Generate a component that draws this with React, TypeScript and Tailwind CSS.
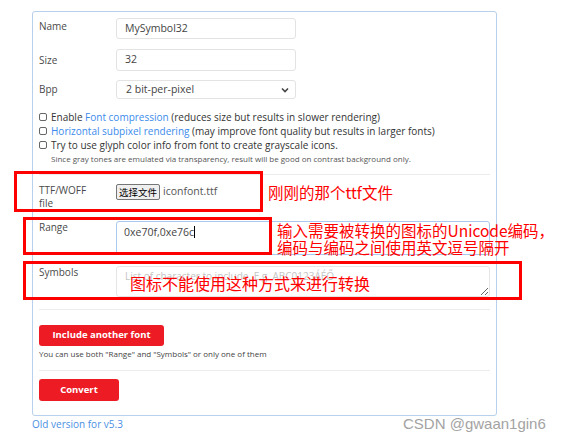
import React from "react";

function Label({ children, className = "" }: { children: React.ReactNode; className?: string }) {
  return <div className={`w-[77px] shrink-0 text-[10px] text-[#4a4a4a] ${className}`}>{children}</div>;
}

function Check({ children }: { children: React.ReactNode }) {
  return (
    <label className="flex items-center h-[14px] text-[10px] text-[#333]">
      <span className="w-[8px] h-[8px] border border-[#666] rounded-[2px] bg-white shrink-0" />
      <span className="ml-[4px] whitespace-nowrap">{children}</span>
    </label>
  );
}

const Link = ({ children }: { children: React.ReactNode }) => (
  <span className="text-[#3b8beb]">{children}</span>
);

export default function App() {
  return (
    <div className="relative w-[564px] h-[443px] bg-white overflow-hidden font-['Open_Sans','Noto_Sans_CJK_SC',sans-serif]">
      <div className="pt-[11px] pl-[32px]">
        <form className="w-[465px] border border-[#b7d0ec] rounded-[3px] pl-[6px] pr-[6px] pt-[6px] pb-[14px]">
          {/* Name */}
          <div className="flex items-start">
            <Label className="leading-[14px] pt-[1px]">Name</Label>
            <div className="w-[180px] h-[21px] border border-[#e3e3e3] rounded-[3px] pl-[8px] flex items-center text-[10.5px] text-[#444]">
              MySymbol32
            </div>
          </div>
          {/* Size */}
          <div className="flex items-center mt-[10px]">
            <Label>Size</Label>
            <div className="w-[180px] h-[22px] border border-[#e3e3e3] rounded-[3px] pl-[8px] flex items-center text-[10.5px] text-[#444]">
              32
            </div>
          </div>
          {/* Bpp */}
          <div className="flex items-center mt-[9px]">
            <Label>Bpp</Label>
            <div className="relative w-[180px] h-[19px] border border-[#e3e3e3] rounded-[3px] pl-[9px] flex items-center text-[10.5px] text-[#444]">
              2 bit-per-pixel
              <svg className="absolute right-[6px] top-[6px]" width="8" height="6" viewBox="0 0 8 6">
                <path d="M1 1.5 L4 4.5 L7 1.5" fill="none" stroke="#444" strokeWidth="1.6" />
              </svg>
            </div>
          </div>

          {/* Options */}
          <div className="mt-[11px]">
            <Check>
              Enable <Link>Font compression</Link> (reduces size but results in slower rendering)
            </Check>
            <Check>
              <Link>Horizontal subpixel rendering</Link> (may improve font quality but results in larger fonts)
            </Check>
            <Check>Try to use glyph color info from font to create grayscale icons.</Check>
            <div className="mt-[2px] pl-[12px] text-[8px] leading-[10px] text-[#555] whitespace-nowrap">
              Since gray tones are emulated via transparency, result will be good on contrast background only.
            </div>
          </div>

          <div className="mt-[10px] h-px bg-[#ececec]" />

          {/* File */}
          <div className="flex items-start mt-[9px]">
            <Label className="leading-[13px]">
              <div className="max-w-[58px]">TTF/WOFF file</div>
            </Label>
            <div className="flex items-center">
              <span className="w-[44px] h-[16px] border border-[#767676] rounded-[2px] bg-[#efefef] flex items-center justify-center text-[9.5px] text-black font-['Noto_Sans_CJK_SC',sans-serif]">
                选择文件
              </span>
              <span className="ml-[3px] text-[10.5px] text-[#555]">iconfont.ttf</span>
            </div>
          </div>

          {/* Range */}
          <div className="flex items-start mt-[11px]">
            <Label className="leading-[12px]">Range</Label>
            <div className="flex-1 h-[34px] border border-[#a9c9f0] rounded-[3px] pl-[7px] pt-[3px] text-[10.5px] leading-[14px] text-[#444]">
              0xe70f,0xe76c
              <span className="inline-block w-px h-[12px] bg-black align-[-2px]" />
            </div>
          </div>

          {/* Symbols */}
          <div className="flex items-start mt-[11px]">
            <Label className="leading-[12px]">Symbols</Label>
            <textarea
              readOnly
              placeholder="List of character to include. E.g. ABC0123ÁÉŐ"
              className="flex-1 h-[31px] border border-[#e6e6e6] rounded-[3px] pl-[8px] pt-[2px] text-[10px] leading-[14px] text-[#444] placeholder:text-[#c4c4c4] outline-none"
            />
          </div>

          <div className="mt-[12px] h-px bg-[#ececec]" />

          <button
            type="button"
            className="mt-[15px] w-[125px] h-[21px] rounded-[3px] bg-[#ed1c24] text-white text-[9.5px] font-bold"
          >
            Include another font
          </button>
          <div className="mt-[3px] text-[8px] leading-[10px] text-[#444] whitespace-nowrap">
            You can use both "Range" and "Symbols" or only one of them
          </div>

          <div className="mt-[11px] h-px bg-[#ececec]" />

          <button
            type="button"
            className="block mt-[8px] w-[80px] h-[22px] rounded-[3px] bg-[#ed1c24] text-white text-[9.5px] font-bold"
          >
            Convert
          </button>
        </form>
        <div className="mt-[1px] text-[10px] leading-[14px] text-[#4a90e2]">Old version for v5.3</div>
      </div>

      {/* annotations drawn over the screenshot */}
      <div className="absolute left-[14px] top-[171px] w-[249px] h-[41px] border-[3px] border-[#ff0000]" />
      <div className="absolute left-[23px] top-[217px] w-[249px] h-[38px] border-[3px] border-[#ff0000]" />
      <div className="absolute left-[23px] top-[261px] w-[499px] h-[39px] border-[3px] border-[#ff0000]" />
      <div className="absolute left-[268px] top-[182px] text-[15.5px] leading-[20px] text-[#ff0000] font-['Noto_Sans_CJK_SC',sans-serif] whitespace-nowrap">
        刚刚的那个ttf文件
      </div>
      <div className="absolute left-[277px] top-[222px] text-[15.5px] leading-[17px] text-[#ff0000] font-['Noto_Sans_CJK_SC',sans-serif] whitespace-nowrap">
        输入需要被转换的图标的Unicode编码，
        <br />
        编码与编码之间使用英文逗号隔开
      </div>
      <div className="absolute left-[130px] top-[273px] text-[16px] leading-[20px] text-[#ff0000] font-['Noto_Sans_CJK_SC',sans-serif] whitespace-nowrap">
        图标不能使用这种方式来进行转换
      </div>
      <div className="absolute left-[403px] top-[415px] text-[15px] leading-[18px] text-[#a3a3a3] font-['Liberation_Sans',sans-serif] whitespace-nowrap">
        CSDN @gwaan1gin6
      </div>
    </div>
  );
}
